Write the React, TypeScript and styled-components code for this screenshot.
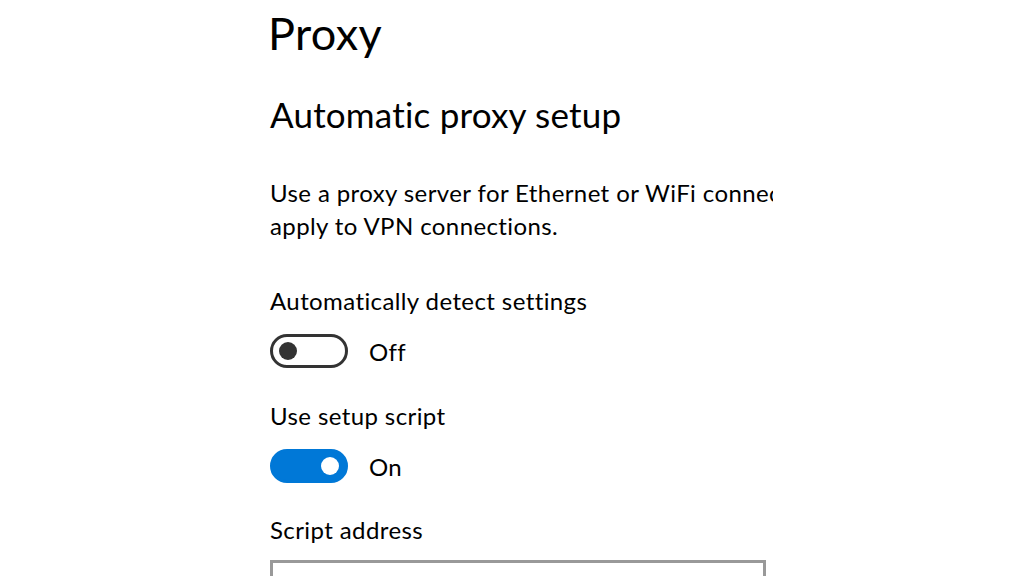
import React from "react";
import styled, { createGlobalStyle } from "styled-components";

const GlobalStyle = createGlobalStyle`
  html, body {
    margin: 0;
    padding: 0;
    background: #ffffff;
  }
  body {
    font-family: Lato, "Open Sans", "Liberation Sans", sans-serif;
    font-variant-ligatures: none;
    color: #000000;
    width: 1024px;
    height: 576px;
    overflow: hidden;
  }
`;

const Page = styled.main`
  display: flex;
  flex-direction: column;
  padding: 3px 0 0 270px;
  width: 503px;
  overflow: hidden;
  height: 573px;
`;

const Title = styled.h1`
  margin: 0 0 0 -2px;
  font-size: 45px;
  letter-spacing: 0.4px;
  line-height: 60px;
  font-weight: 400;
  white-space: nowrap;
`;

const SectionHeading = styled.h2`
  margin: 29px 0 0 0;
  font-size: 35px;
  letter-spacing: 0.2px;
  line-height: 44px;
  font-weight: 400;
  white-space: nowrap;
`;

const Description = styled.p`
  margin: 40px 0 0 0;
  font-size: 24px;
  letter-spacing: 0.4px;
  line-height: 33px;
  white-space: nowrap;
`;

const Setting = styled.section<{ $top: number }>`
  display: flex;
  flex-direction: column;
  gap: 17px;
  margin-top: ${(p) => p.$top}px;
`;

const Label = styled.div`
  font-size: 24px;
  letter-spacing: 0.4px;
  line-height: 33px;
  white-space: nowrap;
`;

const ToggleRow = styled.div`
  display: flex;
  align-items: center;
  gap: 21px;
`;

const Track = styled.div<{ $on: boolean }>`
  box-sizing: border-box;
  width: 78px;
  height: 34px;
  border-radius: 17px;
  border: 3px solid ${(p) => (p.$on ? "#0078d7" : "#333333")};
  background: ${(p) => (p.$on ? "#0078d7" : "#ffffff")};
  display: flex;
  align-items: center;
  justify-content: ${(p) => (p.$on ? "flex-end" : "flex-start")};
  padding: 0 6px;
`;

const Knob = styled.div<{ $on: boolean }>`
  width: 18px;
  height: 18px;
  border-radius: 50%;
  background: ${(p) => (p.$on ? "#ffffff" : "#333333")};
`;

const StateText = styled.span`
  font-size: 24px;
  letter-spacing: 0.4px;
  line-height: 33px;
`;

const AddressSetting = styled.section`
  display: flex;
  flex-direction: column;
  gap: 14px;
  margin-top: 30px;
`;

const TextBox = styled.input`
  box-sizing: border-box;
  width: 496px;
  height: 48px;
  border: 3px solid #999999;
  background: #ffffff;
  font-family: inherit;
  font-size: 24px;
  padding: 0 10px;
  outline: none;
  flex-shrink: 0;
`;

function Toggle({ on }: { on: boolean }) {
  return (
    <ToggleRow>
      <Track $on={on}>
        <Knob $on={on} />
      </Track>
      <StateText>{on ? "On" : "Off"}</StateText>
    </ToggleRow>
  );
}

export default function App() {
  return (
    <>
      <GlobalStyle />
      <Page>
        <Title>Proxy</Title>
        <SectionHeading>Automatic proxy setup</SectionHeading>
        <Description>
          Use a proxy server for Ethernet or WiFi connections. These settings don't
          <br />
          apply to VPN connections.
        </Description>
        <Setting $top={42}>
          <Label>Automatically detect settings</Label>
          <Toggle on={false} />
        </Setting>
        <Setting $top={31}>
          <Label>Use setup script</Label>
          <Toggle on={true} />
        </Setting>
        <AddressSetting>
          <Label>Script address</Label>
          <TextBox type="text" aria-label="Script address" />
        </AddressSetting>
      </Page>
    </>
  );
}
